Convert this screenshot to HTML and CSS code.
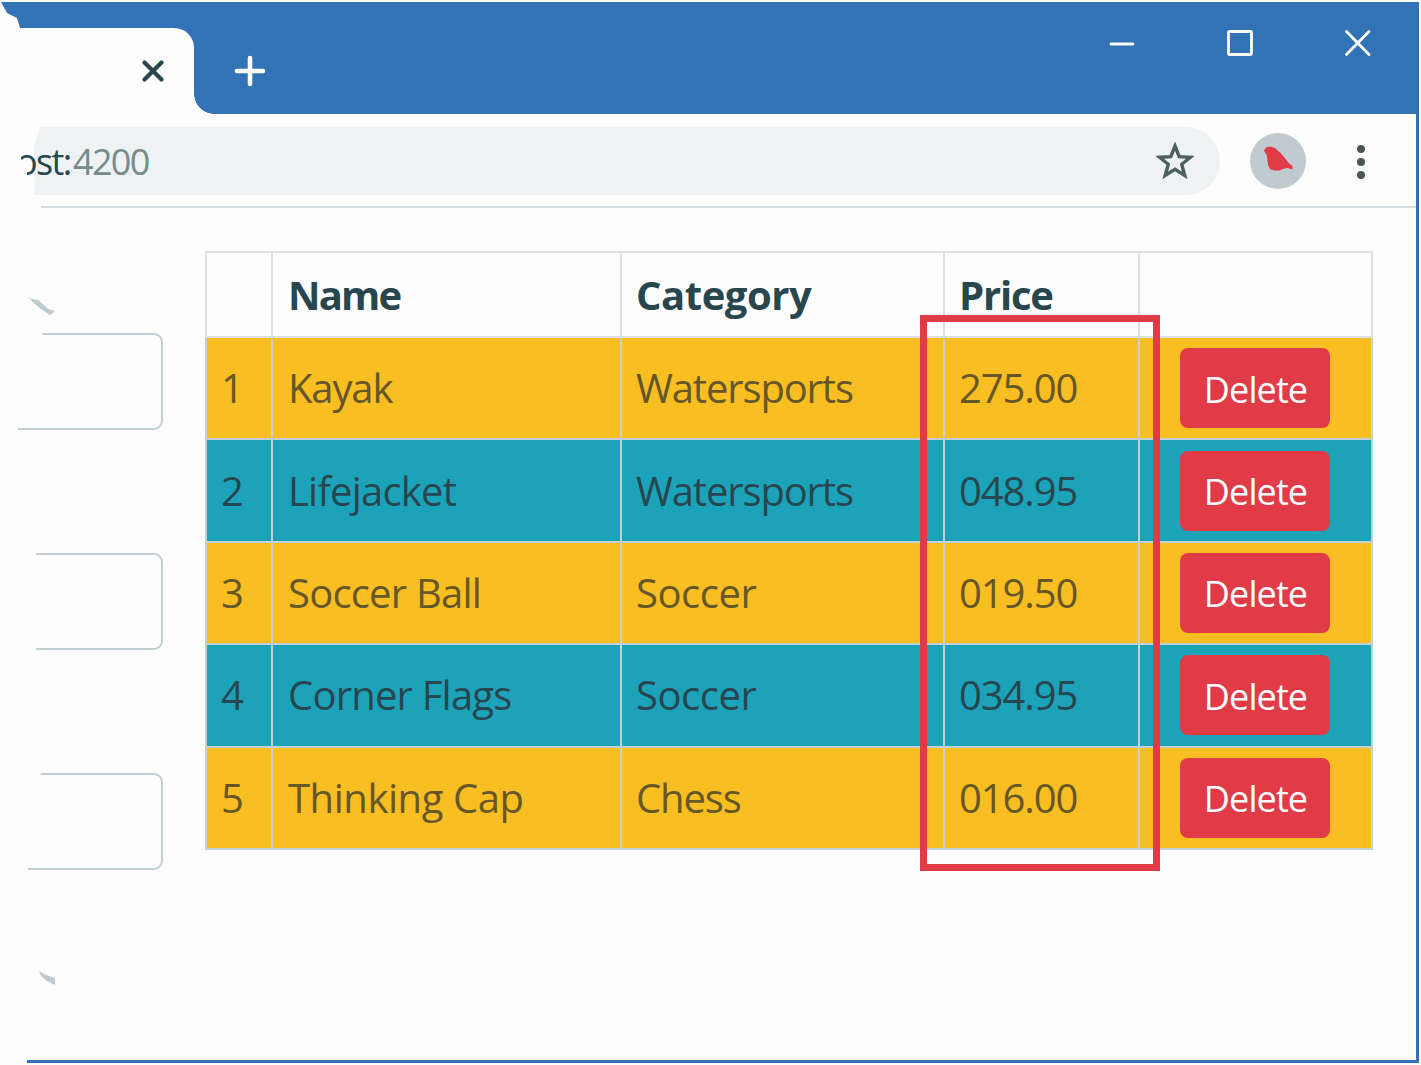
FILE: index.html
```html
<!DOCTYPE html>
<html lang="en">
<head>
<meta charset="utf-8">
<title>Products</title>
<link rel="stylesheet" href="styles.css">
</head>
<body>
<div class="window">
  <header class="titlebar">
    <div class="tab">
      <svg class="tab-close" width="24" height="24" viewBox="0 0 24 24"><path d="M3.500 3.500 20.500 20.500M20.500 3.500 3.500 20.500"/></svg>
    </div>
    <svg class="new-tab" width="32" height="32" viewBox="0 0 32 32"><path d="M16 3V29M3 16H29"/></svg>
    <div class="controls">
      <svg width="28" height="28" viewBox="0 0 28 28"><path d="M3 15H25"/></svg>
      <svg width="28" height="28" viewBox="0 0 28 28"><rect x="2.500" y="2.500" width="23" height="23" rx="1"/></svg>
      <svg width="28" height="28" viewBox="0 0 28 28"><path d="M2.500 2.500 25 25.500M25 2.500 2.500 25.500"/></svg>
    </div>
  </header>
  <div class="toolbar">
    <div class="address">
      <span class="host">ost:</span><span class="port">4200</span>
      <svg class="star" width="38" height="38" viewBox="0 0 38 38"><path d="M19 4 23.2 14.6 34.500 15.200 25.700 22.300 28.800 33.500 19 27.300 9.200 33.500 12.300 22.300 3.500 15.200 14.800 14.600Z"/></svg>
    </div>
    <svg class="avatar" width="56" height="56" viewBox="0 0 56 56"><circle cx="28" cy="28" r="28"/><path d="M14 17.500 16 14.500 20 13.500 25 15 31 20.500 36 26.500 38.500 30 42.500 33 42.500 36.500 38 35 34 35.500 30 37.500 24 37.500 20 36 18 32 17 23Z"/></svg>
    <svg class="menu" width="10" height="36" viewBox="0 0 10 36"><circle cx="5" cy="5" r="4"/><circle cx="5" cy="18" r="4"/><circle cx="5" cy="31" r="4"/></svg>
  </div>
  <main class="content">
    <div class="form">
      <svg class="scrap" width="30" height="22" viewBox="0 0 30 22"><path d="M1 1 5 3 11 4 17 9 21 13 28 15 23 19 14 13 8 8Z"/></svg>
      <div class="field field-name"></div>
      <div class="field field-category"></div>
      <div class="field field-price"></div>
      <svg class="scrap scrap-low" width="30" height="22" viewBox="0 0 30 22"><path d="M12 3 19 7 28 10 28 17 20 13 14 8Z"/></svg>
    </div>
    <div class="products">
      <table>
        <colgroup><col class="c-id"><col class="c-name"><col class="c-cat"><col class="c-price"><col class="c-act"></colgroup>
        <thead>
          <tr><th></th><th class="tight">Name</th><th class="snug">Category</th><th>Price</th><th></th></tr>
        </thead>
        <tbody>
          <tr class="warn"><td>1</td><td class="tight">Kayak</td><td class="tight">Watersports</td><td class="num">275.00</td><td class="act"><button>Delete</button></td></tr>
          <tr class="info"><td>2</td><td>Lifejacket</td><td class="tight">Watersports</td><td class="num">048.95</td><td class="act"><button>Delete</button></td></tr>
          <tr class="warn"><td>3</td><td>Soccer Ball</td><td class="snug">Soccer</td><td class="num">019.50</td><td class="act"><button>Delete</button></td></tr>
          <tr class="info"><td>4</td><td>Corner Flags</td><td class="snug">Soccer</td><td class="num">034.95</td><td class="act"><button>Delete</button></td></tr>
          <tr class="warn"><td>5</td><td class="snug">Thinking Cap</td><td class="tight">Chess</td><td class="num">016.00</td><td class="act"><button>Delete</button></td></tr>
        </tbody>
      </table>
      <div class="callout"></div>
    </div>
  </main>
  <div class="bottom-edge"></div>
</div>
</body>
</html>
```
FILE: styles.css
```css
* { box-sizing: border-box; }
body {
  margin: 0;
  background: #fdfdfd;
  font-family: "Open Sans", "Noto Sans", sans-serif;
  color: #28464d;
  overflow: hidden;
}
svg { display: block; fill: none; flex: none; }
.window {
  width: 1421px;
  height: 1065px;
  padding: 2px 2px 2px 0;
  display: flex;
  flex-direction: column;
}
.titlebar {
  height: 112px;
  flex: none;
  display: flex;
  background: #3173b4;
  clip-path: polygon(1px 0, 100% 0, 100% 100%, 0 100%, 0 26px, 20px 26px, 17px 16px, 7px 11px);
}
.tab {
  position: relative;
  width: 194px;
  height: 86px;
  margin-top: 26px;
  background: #fdfdfd;
  border-radius: 0 20px 0 0;
  padding: 31px 0 0 141px;
}
.tab::after {
  content: "";
  position: absolute;
  left: 194px;
  bottom: 0;
  width: 20px;
  height: 20px;
  background: radial-gradient(circle at 100% 0, transparent 19.5px, #fdfdfd 20px);
}
.tab-close { stroke: #28464d; stroke-width: 4.2; stroke-linecap: round; }
.new-tab { margin: 53px 0 0 40px; stroke: #fdfdfd; stroke-width: 4.6; stroke-linecap: round; }
.controls {
  display: flex;
  gap: 90px;
  margin: 27px 47px 0 auto;
  stroke: #fdfdfd;
  stroke-width: 2.8;
  stroke-linecap: round;
}
.toolbar {
  height: 94px;
  flex: none;
  display: flex;
  align-items: flex-start;
  border-right: 3px solid #3173b4;
  background: linear-gradient(#d6dde0, #d6dde0) 41px 92px / 1376px 2px no-repeat;
}
.address {
  position: relative;
  width: 1200px;
  height: 68px;
  margin: 13px 0 0 20px;
  display: flex;
  align-items: center;
  font-size: 36px;
  line-height: 68px;
}
.address::before {
  content: "";
  position: absolute;
  inset: 0 0 0 14px;
  z-index: -1;
  background: #eff2f3;
  border-radius: 0 34px 34px 0;
  clip-path: polygon(6px 0, 100% 0, 100% 100%, 0 100%, 1px 40px, 0 20px);
}
.host {
  width: 53px;
  padding-top: 1px;
  text-indent: -4px;
  letter-spacing: -1.6px;
  white-space: nowrap;
  clip-path: polygon(1px 0, 100% 0, 100% 100%, 7px 100%, 7px 42px, 1px 32px);
}
.port { padding-top: 1px; color: #798a8d; letter-spacing: -1.7px; }
.star { margin: 0 26px 0 auto; stroke: #4e605c; stroke-width: 3.4; }
.avatar { margin: 19px 0 0 30px; }
.avatar circle { fill: #bfcbd0; }
.avatar path { fill: #e03b46; }
.menu { margin: 30px 0 0 50px; fill: #4b5650; }
.content {
  flex: 1;
  display: flex;
  border-right: 3px solid #3173b4;
}
.form { width: 205px; padding-top: 88px; }
.scrap { margin-left: 27px; fill: #bcc9ce; }
.scrap-low { margin-top: 98px; }
.field {
  height: 97px;
  border: 2px solid #c3ced2;
  border-left: 0;
  border-radius: 0 9px 9px 0;
}
.field + .field { margin-top: 123px; }
.field-name { margin: 15px 42px 0 18px; clip-path: polygon(25px 0, 100% 0, 100% 100%, 0 100%, 0 50%); }
.field-category { margin-left: 36px; margin-right: 42px; }
.field-price { margin-left: 28px; margin-right: 42px; clip-path: polygon(13px 0, 100% 0, 100% 100%, 0 100%, 0 50%); }
.products { position: relative; padding-top: 43px; }
table {
  width: 1168px;
  table-layout: fixed;
  border-collapse: collapse;
  font-size: 40px;
  line-height: 52px;
}
.c-id { width: 66px; }
.c-name { width: 349px; }
.c-cat { width: 323px; }
.c-price { width: 195px; }
.c-act { width: 233px; }
th, td {
  height: 102.4px;
  padding: 0 0 0 14px;
  border: 2px solid #c5d0d4;
  text-align: left;
  white-space: nowrap;
  letter-spacing: -0.8px;
}
th { height: 85px; border-color: #dbe1e4; letter-spacing: -1.2px; }
th:nth-child(2), td:nth-child(2) { padding-left: 15px; }
.tight { letter-spacing: -1.15px; }
th.tight { letter-spacing: -1.8px; }
.snug { letter-spacing: -0.45px; }
.warn { background: #f9be22; color: #665728; }
.info { background: #1ca3ba; color: #28464f; }
.num { letter-spacing: -1.1px; }
td.act { padding: 0 1px 0 0; text-align: center; }
button {
  display: block;
  width: 150px;
  height: 80px;
  margin: 0 auto;
  padding: 3px 0 0 1px;
  border: 0;
  border-radius: 8px;
  background: #e03b46;
  color: #fdfdfd;
  font: 36px/50px "Open Sans", "Noto Sans", sans-serif;
  letter-spacing: -0.9px;
}
.callout {
  position: absolute;
  left: 715px;
  top: 107px;
  width: 240px;
  height: 556px;
  border: 7px solid #e03b46;
}
.bottom-edge { height: 3px; flex: none; margin-left: 27px; background: #3173b4; }
```
